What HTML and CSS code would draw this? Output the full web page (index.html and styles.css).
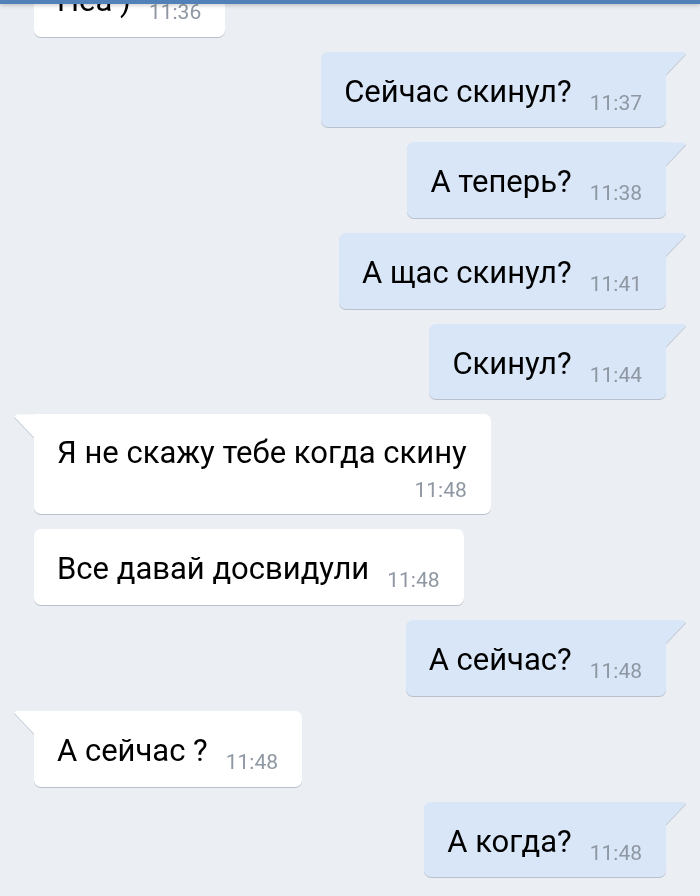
FILE: index.html
```html
<!DOCTYPE html>
<html lang="ru">
<head>
    <meta charset="UTF-8">
    <meta name="viewport" content="width=device-width, initial-scale=1.0">
    <title>Сообщения</title>
    <link rel="stylesheet" href="styles.css">
</head>
<body>
    <div class="screen">
        <div class="topbar"></div>
        <div class="chat">
            <div class="row in">
                <div class="bubble cont">Неа )<span class="time">11:36</span></div>
            </div>
            <div class="row out">
                <div class="bubble tail">Сейчас скинул?<span class="time">11:37</span></div>
            </div>
            <div class="row out">
                <div class="bubble tail">А теперь?<span class="time">11:38</span></div>
            </div>
            <div class="row out">
                <div class="bubble tail">А щас скинул?<span class="time">11:41</span></div>
            </div>
            <div class="row out">
                <div class="bubble tail">Скинул?<span class="time">11:44</span></div>
            </div>
            <div class="row in">
                <div class="bubble tail wrap">Я не скажу тебе когда скину<span class="time">11:48</span></div>
            </div>
            <div class="row in">
                <div class="bubble cont">Все давай досвидули<span class="time">11:48</span></div>
            </div>
            <div class="row out">
                <div class="bubble tail">А сейчас?<span class="time">11:48</span></div>
            </div>
            <div class="row in">
                <div class="bubble tail">А сейчас ?<span class="time">11:48</span></div>
            </div>
            <div class="row out">
                <div class="bubble tail">А когда?<span class="time">11:48</span></div>
            </div>
        </div>
    </div>
</body>
</html>
```

FILE: styles.css
```css
* {
    margin: 0;
    padding: 0;
    box-sizing: border-box;
}

body {
    background: #ebeef2;
    font-family: Roboto, "Noto Sans", sans-serif;
    overflow: hidden;
}

.screen {
    position: relative;
    width: 700px;
    height: 896px;
    overflow: hidden;
}

/* полоска шапки сверху */
.topbar {
    position: absolute;
    top: 0;
    left: 0;
    right: 0;
    height: 4px;
    background: #5181b8;
    box-shadow: 0 1px 4px rgba(0, 0, 0, 0.25);
    z-index: 2;
}

.chat {
    display: flex;
    flex-direction: column;
    gap: 15px;
    margin-top: -39px;
}

.row {
    display: flex;
}

.row.in {
    justify-content: flex-start;
    padding-left: 34px;
}

.row.out {
    justify-content: flex-end;
    padding-right: 34px;
}

.bubble {
    position: relative;
    height: 75.7px;
    padding: 22px 24px 0 23px;
    font-size: 31px;
    line-height: 36px;
    color: #000;
    border-radius: 7px;
    white-space: nowrap;
    filter: drop-shadow(0 1px 0.6px rgba(60, 80, 110, 0.28));
}

.in .bubble {
    background: #fff;
}

.out .bubble {
    background: #d8e6f7;
}

.time {
    display: inline-block;
    margin-left: 18px;
    font-size: 21px;
    line-height: 20px;
    color: #8e97a2;
    vertical-align: -8px;
}

.bubble.wrap {
    height: 100px;
    padding-top: 21px;
}

.bubble.wrap .time {
    display: block;
    text-align: right;
    margin: 7px 0 0;
    line-height: 24px;
}

/* хвостик у первого сообщения в группе */
.tail::before {
    content: "";
    position: absolute;
    top: 0;
    width: 21px;
    height: 26px;
    background: inherit;
}

.out .tail {
    border-top-right-radius: 0;
}

.out .tail::before {
    right: -20px;
    clip-path: polygon(0 0, 18px 0, 21px 2px, 1px 23px, 0 26px);
}

.in .tail {
    border-top-left-radius: 0;
}

.in .tail::before {
    left: -20px;
    clip-path: polygon(3px 0, 21px 0, 21px 26px, 20px 23px, 0 2px);
}
```
